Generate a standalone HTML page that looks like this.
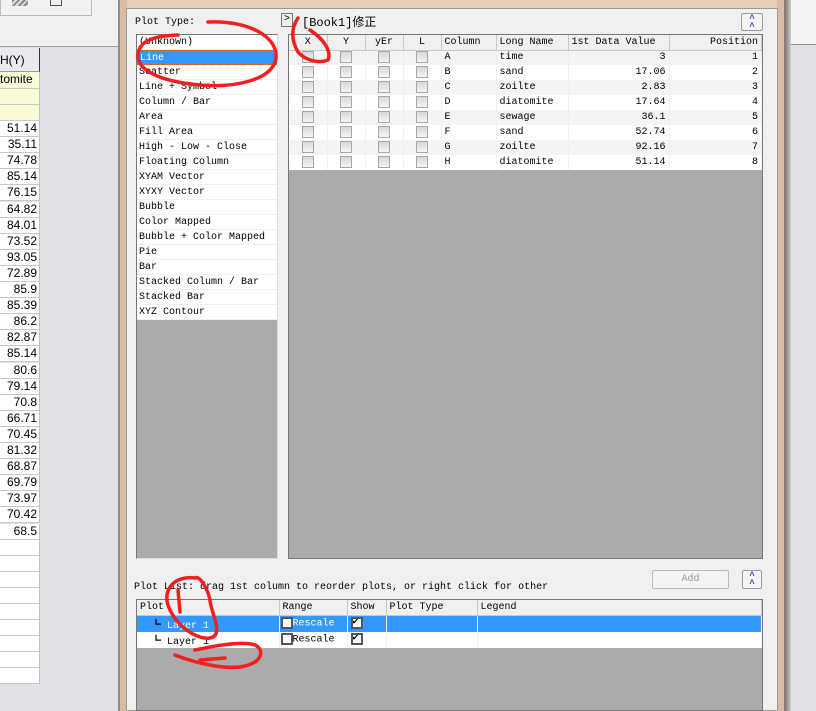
<!DOCTYPE html>
<html><head><meta charset="utf-8"><style>
*{margin:0;padding:0;box-sizing:border-box}
body{width:816px;height:711px;overflow:hidden;background:#e1e1e6;position:relative;font-family:"Liberation Mono","Noto Sans CJK SC",monospace;font-size:10px;color:#000}
.a{position:absolute}
.sheet div{position:absolute;left:0;width:40px;border-bottom:1px solid #c8c8c8;border-right:1px solid #c0c0c0;text-align:right;padding-right:2px;font-family:"Liberation Sans",sans-serif;font-size:12px;background:#fff}
.list div{height:15px;line-height:15px;padding-left:2px;border-bottom:1px solid #f0f0f0;white-space:nowrap}
table{border-collapse:collapse;font-size:10px}
td{height:15px;padding:0 3px;white-space:nowrap;border-right:1px solid #f0f0f0}
.h td{background:#f0f0f0;border-right:1px solid #c8c8c8;border-bottom:1px solid #c8c8c8}
.cb{display:inline-block;width:12px;height:12px;border:1px solid #a8a8a8;background:linear-gradient(#d8d8d8,#f4f4f4);vertical-align:middle}
.r{text-align:right}.c{text-align:center}
</style></head><body>
<div class="a" style="left:0;top:0;width:118px;height:47px;background:#f0f0f0;border-bottom:1px solid #a0a0a0"></div>
<div class="a" style="left:0;top:0;width:92px;height:16px;border:1px solid #bbb;border-top:none;background:#f2f2f2"></div>
<div class="a" style="left:12px;top:0;width:16px;height:6px;background:repeating-linear-gradient(135deg,#888 0 2px,#ddd 2px 4px)"></div>
<div class="a" style="left:50px;top:0;width:12px;height:6px;border:1px solid #555;border-top:none"></div>
<div class="a" style="left:0;top:48px;width:40px;height:24px;background:#e8e8ee;border-right:1px solid #333;border-bottom:1px solid #999;font-family:'Liberation Sans',sans-serif;font-size:12px;line-height:24px">H(Y)</div>
<div class="sheet">
<div style="top:72px;height:17px;background:#fbfbd7;text-align:left;padding:0">tomite</div>
<div style="top:89px;height:16px;background:#fbfbd7"></div>
<div style="top:105px;height:16px;background:#fbfbd7"></div>
</div>
<div class="sheet" id="sh"></div>
<div class="a" style="left:118px;top:0;width:667px;height:711px;background:#d8bca6;border-left:2px solid #9a8a80;border-right:1px solid #8a7a70"></div>
<div class="a" style="left:785px;top:0;width:6px;height:711px;background:linear-gradient(90deg,#777,#ccc)"></div>
<div class="a" style="left:791px;top:0;width:25px;height:45px;background:#f4f4f4;border-bottom:1px solid #888"></div>
<div class="a" style="left:126px;top:8px;width:652px;height:703px;background:#f0f0f0;border:1px solid #a09a94"></div>
<div class="a" style="left:127px;top:0;width:650px;height:8px;background:#e6cdb8"></div>
<div class="a" style="left:135px;top:17px">Plot Type:</div>
<div class="a list" style="left:136px;top:34px;width:142px;height:525px;background:#ababab;border:1px solid #777;border-right-color:#ddd;border-bottom-color:#ddd">
<div style="background:#fff">(Unknown)</div>
<div style="background:#3399ff;color:#fff;border:1px dotted #c60">Line</div>
<div style="background:#fff">Scatter</div><div style="background:#fff">Line + Symbol</div><div style="background:#fff">Column / Bar</div><div style="background:#fff">Area</div><div style="background:#fff">Fill Area</div><div style="background:#fff">High - Low - Close</div><div style="background:#fff">Floating Column</div><div style="background:#fff">XYAM Vector</div><div style="background:#fff">XYXY Vector</div><div style="background:#fff">Bubble</div><div style="background:#fff">Color Mapped</div><div style="background:#fff">Bubble + Color Mapped</div><div style="background:#fff">Pie</div><div style="background:#fff">Bar</div><div style="background:#fff">Stacked Column / Bar</div><div style="background:#fff">Stacked Bar</div><div style="background:#fff">XYZ Contour</div>
</div>
<div class="a" style="left:281px;top:13px;width:12px;height:14px;border:1px solid #777;background:#eee;font-size:10px;line-height:12px;text-align:center">&gt;</div>
<div class="a" style="left:302px;top:13px;font-size:12px">[Book1]修正</div>
<div class="a" style="left:741px;top:13px;width:22px;height:18px;border:1px solid #999;border-radius:2px;background:#f4f4f4;color:#00c;text-align:center;font-size:10px;line-height:8px;padding-top:2px">^<br>^</div>
<div class="a" style="left:288px;top:34px;width:475px;height:525px;background:#ababab;border:1px solid #777">
<table style="width:473px;background:#fff">
<tr class="h"><td class="c" style="width:38px">X</td><td class="c" style="width:38px">Y</td><td class="c" style="width:38px">yEr</td><td class="c" style="width:38px">L</td><td style="width:55px">Column</td><td style="width:72px">Long Name</td><td style="width:101px">1st Data Value</td><td class="r">Position</td></tr>
<tbody id="rows"></tbody>
</table></div>
<div class="a" style="left:134px;top:582px">Plot List: drag 1st column to reorder plots, or right click for other</div>
<div class="a" style="left:652px;top:570px;width:77px;height:19px;border:1px solid #bbb;border-radius:2px;background:#f4f4f4;color:#999;text-align:center;line-height:17px">Add</div>
<div class="a" style="left:742px;top:570px;width:20px;height:19px;border:1px solid #999;border-radius:2px;background:#f4f4f4;color:#00c;text-align:center;font-size:10px;line-height:8px;padding-top:2px">^<br>^</div>
<div class="a" style="left:136px;top:599px;width:627px;height:112px;background:#ababab;border:1px solid #777">
<table style="width:625px;background:#fff">
<tr class="h"><td style="width:142px">Plot</td><td style="width:68px">Range</td><td style="width:39px">Show</td><td style="width:91px">Plot Type</td><td>Legend</td></tr>
<tr style="background:#3399ff;color:#fff"><td style="padding-left:14px"><b style="color:#000">┗</b> Layer 1</td><td style="padding-left:1px"><span class="cb" style="background:#fff;border:2px solid #555"></span>Rescale</td><td><span class="cb" style="background:#fff;border:2px solid #555;font-size:10px;line-height:8px;color:#000">✔</span></td><td></td><td></td></tr>
<tr><td style="padding-left:14px"><b>┗</b> Layer 1</td><td style="padding-left:1px"><span class="cb" style="background:#fff;border:2px solid #555"></span>Rescale</td><td><span class="cb" style="background:#fff;border:2px solid #555;font-size:10px;line-height:8px">✔</span></td><td></td><td></td></tr>
</table></div>
<svg class="a" style="left:0;top:0" width="816" height="711"><g fill="none" stroke="#f02020" stroke-width="3.5" stroke-linecap="round">
<path d="M208 22 C245 20 278 35 276 58 C273 80 235 88 200 85 C165 82 137 72 138 55 C139 40 155 36 178 35"/>
<path d="M298 18 C291 28 291 40 298 52 C305 60 318 64 328 60 C332 50 322 38 310 30"/>
<path d="M195 578 C175 575 160 590 170 610 C180 630 200 640 210 638 C225 636 210 610 210 600 C208 590 200 575 195 578 M178 590 L180 612 M175 655 C200 665 230 670 245 666 C262 662 265 650 255 645 C240 640 205 648 195 650 M200 660 L225 658"/>
</g></svg>
<script>
var v=[51.14,35.11,74.78,85.14,76.15,64.82,84.01,73.52,93.05,72.89,85.9,85.39,86.2,82.87,85.14,80.6,79.14,70.8,66.71,70.45,81.32,68.87,69.79,73.97,70.42,68.5,"","","","","","","","",""];
var s="";for(var i=0;i<v.length;i++){s+='<div style="top:'+(121+i*16.1)+'px;height:16.1px">'+v[i]+'</div>';}
document.getElementById("sh").innerHTML=s;
var d=[["A","time","3"],["B","sand","17.06"],["C","zoilte","2.83"],["D","diatomite","17.64"],["E","sewage","36.1"],["F","sand","52.74"],["G","zoilte","92.16"],["H","diatomite","51.14"]];
var r="";d.forEach(function(x,i){var cb='<td class="c"><span class="cb"></span></td>';r+='<tr style="background:'+(i%2?'#fff':'#f4f4f4')+'">'+cb+cb+cb+cb+'<td>'+x[0]+'</td><td>'+x[1]+'</td><td class="r">'+x[2]+'</td><td class="r">'+(i+1)+'</td></tr>';});
document.getElementById("rows").innerHTML=r;
</script>
</body></html>
